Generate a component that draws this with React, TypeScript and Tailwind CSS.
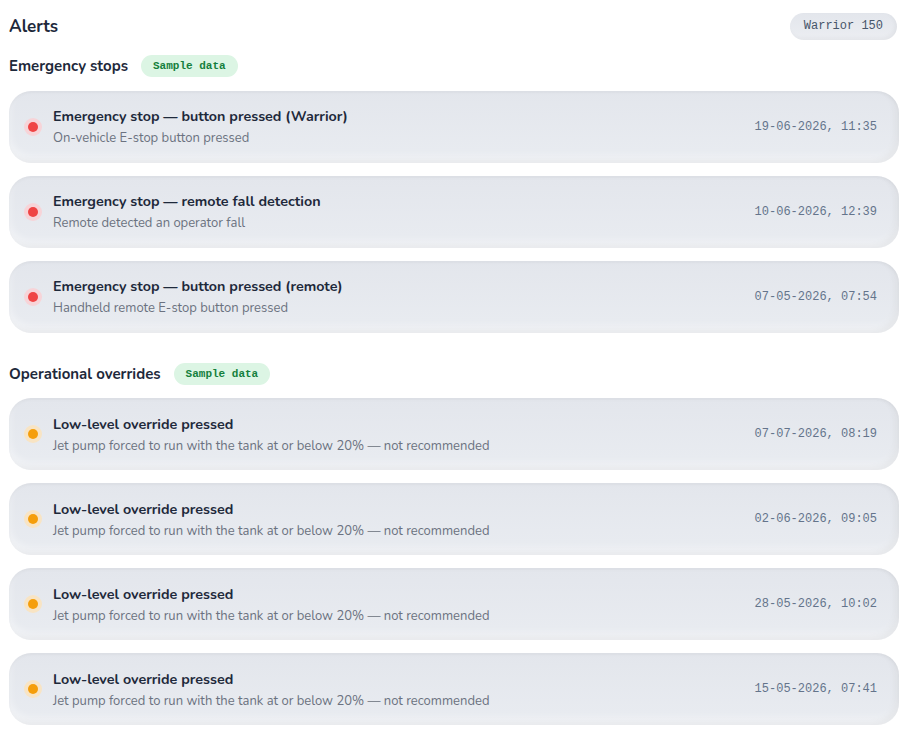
const sans = "font-['Nunito','Lato','Noto_Sans',sans-serif]"
const mono = "font-['Liberation_Mono','DejaVu_Sans_Mono',monospace]"

type Alert = { title: string; desc: string; time: string }

const stops: Alert[] = [
  { title: 'Emergency stop — button pressed (Warrior)', desc: 'On-vehicle E-stop button pressed', time: '19-06-2026, 11:35' },
  { title: 'Emergency stop — remote fall detection', desc: 'Remote detected an operator fall', time: '10-06-2026, 12:39' },
  { title: 'Emergency stop — button pressed (remote)', desc: 'Handheld remote E-stop button pressed', time: '07-05-2026, 07:54' },
]

const lowLevel = 'Jet pump forced to run with the tank at or below 20% — not recommended'
const overrides: Alert[] = [
  { title: 'Low-level override pressed', desc: lowLevel, time: '07-07-2026, 08:19' },
  { title: 'Low-level override pressed', desc: lowLevel, time: '02-06-2026, 09:05' },
  { title: 'Low-level override pressed', desc: lowLevel, time: '28-05-2026, 10:02' },
  { title: 'Low-level override pressed', desc: lowLevel, time: '15-05-2026, 07:41' },
]

function SampleBadge() {
  return (
    <span className={`${mono} rounded-full bg-[#dcf5e4] px-3 py-[4px] text-[11px] font-bold leading-[14px] text-[#15803d]`}>
      Sample data
    </span>
  )
}

function AlertCard({ alert, tone }: { alert: Alert; tone: 'red' | 'amber' }) {
  const dot =
    tone === 'red'
      ? 'bg-[#ef4444] shadow-[0_0_0_4px_#f7d4d8]'
      : 'bg-[#f59e0b] shadow-[0_0_0_4px_#f8e4c4]'
  return (
    <div className="flex h-[72px] items-center rounded-[22px] bg-gradient-to-b from-[#e3e6ec] to-[#e9ecf1] pl-[15px] pr-[22px] shadow-[inset_0_2px_3px_rgba(0,0,0,0.03),inset_-4px_-3px_6px_rgba(0,0,0,0.05),inset_0_-6px_8px_rgba(255,255,255,0.5)]">
      <span className="flex h-[18px] w-[18px] shrink-0 items-center justify-center">
        <span className={`h-[10px] w-[10px] rounded-full ${dot}`} />
      </span>
      <div className="ml-[11px] flex-1 pt-[2px]">
        <div className="text-[14.3px] font-bold leading-[18px] text-[#1e293b]">{alert.title}</div>
        <div className="mt-[4px] text-[13px] leading-[17px] text-[#6b7280]">{alert.desc}</div>
      </div>
      <div className={`${mono} text-[12px] text-[#64748b]`}>{alert.time}</div>
    </div>
  )
}

function Section({ title, items, tone }: { title: string; items: Alert[]; tone: 'red' | 'amber' }) {
  return (
    <section>
      <div className="flex items-center gap-[13px]">
        <h2 className="text-[15px] font-bold text-[#1e293b]">{title}</h2>
        <SampleBadge />
      </div>
      <div className="mt-[13px] flex flex-col gap-[13px]">
        {items.map((a, i) => (
          <AlertCard key={i} alert={a} tone={tone} />
        ))}
      </div>
    </section>
  )
}

export default function App() {
  return (
    <div className={`${sans} min-h-screen bg-white px-[9px] pt-[13px] pb-6`}>
      <div className="flex items-center justify-between pr-[2px]">
        <h1 className="text-[17px] font-bold text-[#1e293b]">Alerts</h1>
        <span className={`${mono} rounded-full bg-gradient-to-b from-[#e3e6ec] to-[#eceef2] px-[14px] py-[5px] text-[12px] leading-[17px] text-[#475569] shadow-[inset_-2px_-2px_4px_rgba(0,0,0,0.04)]`}>
          Warrior 150
        </span>
      </div>
      <div className="mt-[15px] flex flex-col gap-[30px]">
        <Section title="Emergency stops" items={stops} tone="red" />
        <Section title="Operational overrides" items={overrides} tone="amber" />
      </div>
    </div>
  )
}
